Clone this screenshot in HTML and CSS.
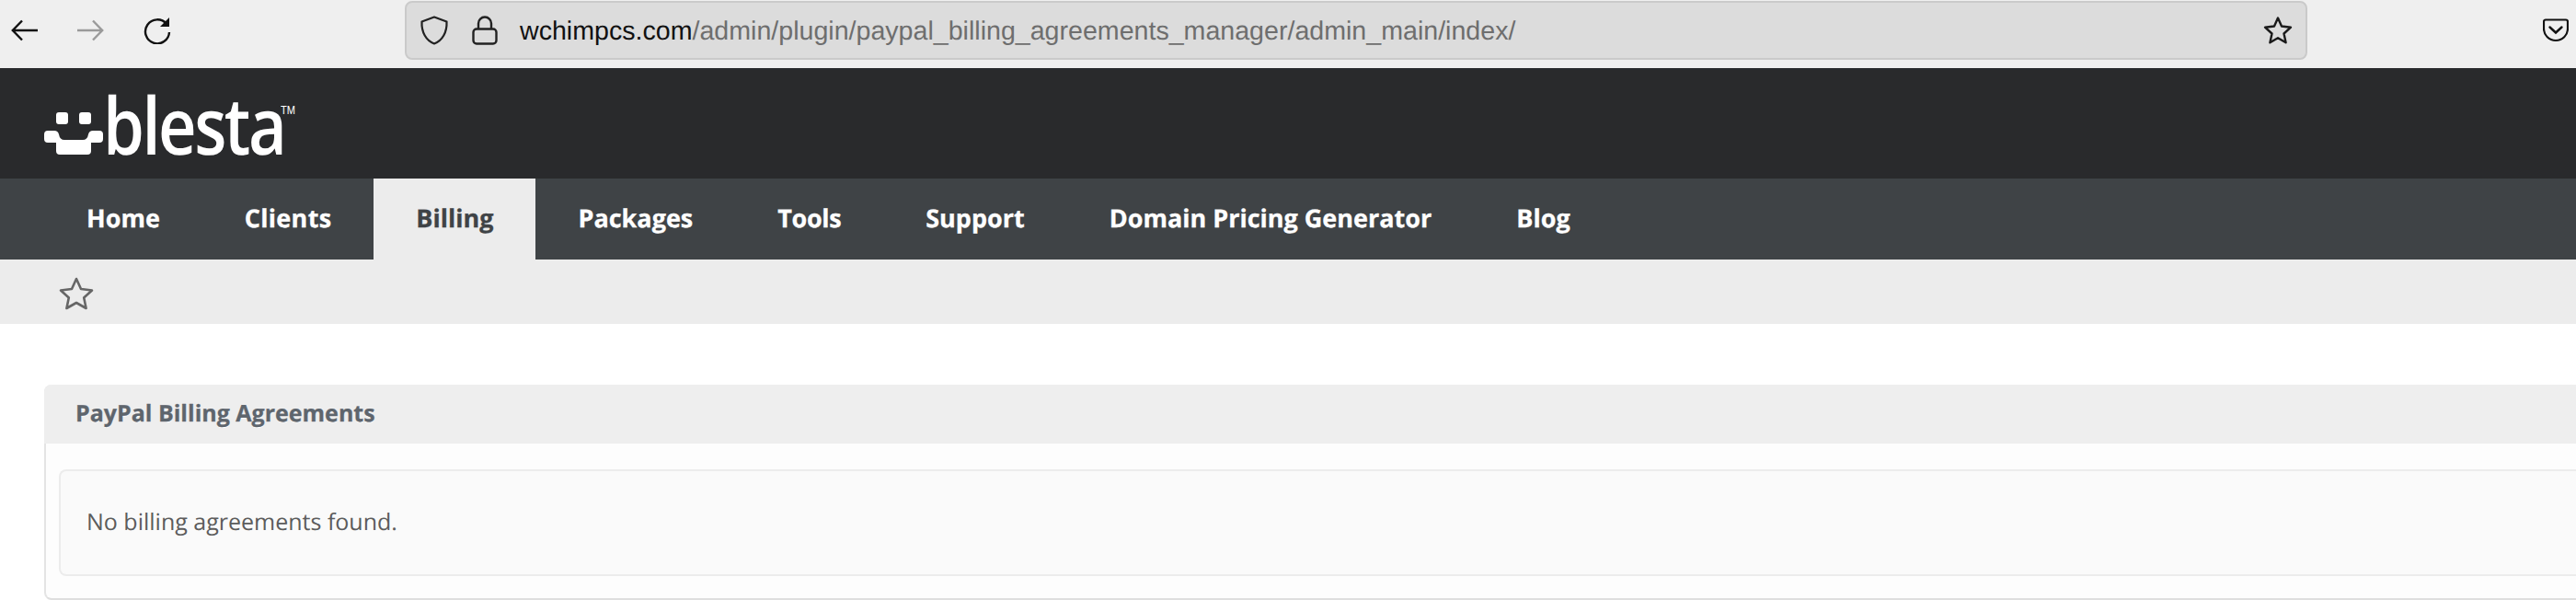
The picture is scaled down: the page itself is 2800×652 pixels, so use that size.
FILE: index.html
```html
<!DOCTYPE html>
<html lang="en">
<head>
<meta charset="utf-8">
<title>PayPal Billing Agreements</title>
<link rel="stylesheet" href="styles.css">
</head>
<body>
<div class="toolbar">
  <svg class="tb-icon back" viewBox="0 0 30 24" width="30" height="24"><path d="M29 12H2M12 1.500 1.800 12 12 22.500" fill="none" stroke="#111" stroke-width="2.400"/></svg>
  <svg class="tb-icon forward" viewBox="0 0 30 24" width="30" height="24"><path d="M0 12h27M17 1.500 27.200 12 17 22.500" fill="none" stroke="#9a9a9a" stroke-width="2.400"/></svg>
  <svg class="tb-icon reload" viewBox="0 0 30 30" width="30" height="30"><path d="M25 8A13 13 0 1 0 28 17" fill="none" stroke="#111" stroke-width="2.400"/><path d="M28 1v10H18z" fill="#111"/></svg>
  <div class="urlbar">
    <svg class="shield" viewBox="0 0 30 32" width="30" height="32"><path d="M15 1.500 28.500 6.500C29 18 24 27 15 30.500 6 27 1 18 1.500 6.500Z" fill="none" stroke="#222" stroke-width="2.200" stroke-linejoin="round"/></svg>
    <svg class="lock" viewBox="0 0 28 32" width="28" height="32"><path d="M7 15V8.500a7 7 0 0 1 14 0V15" fill="none" stroke="#222" stroke-width="2.400"/><rect x="1.500" y="14.500" width="25" height="16" rx="3.500" fill="none" stroke="#222" stroke-width="2.400"/></svg>
    <div class="url"><span class="url-host">wchimpcs.com</span>/admin/plugin/paypal_billing_agreements_manager/admin_main/index/</div>
    <svg class="url-star" viewBox="0 0 32 32" width="32" height="32"><path d="M16 2.500 20 11.500 30 12.700 22.500 19.500 24.600 29.300 16 24.300 7.400 29.300 9.500 19.500 2 12.700 12 11.500Z" fill="none" stroke="#1a1a1a" stroke-width="2.400" stroke-linejoin="round"/></svg>
  </div>
  <svg class="pocket" viewBox="0 0 28 26" width="28" height="26"><path d="M3 1.500h22a2 2 0 0 1 2 2V11a13 13 0 0 1-26 0V3.500a2 2 0 0 1 2-2Z" fill="none" stroke="#111" stroke-width="2.200"/><path d="M7.500 9.500 14 15.500 20.500 9.500" fill="none" stroke="#111" stroke-width="2.400" stroke-linecap="round"/></svg>
</div>

<header class="brand">
  <div class="logo">
    <svg class="smile" viewBox="0 0 64 46" width="64" height="46">
      <rect x="13" y="0" width="13" height="13" rx="3" fill="#fff"/>
      <rect x="38" y="0" width="13" height="13" rx="3" fill="#fff"/>
      <path d="M4 20h7q4 0 5 4 1 6 6 6h20q5 0 6-6 1-4 5-4h7q4 0 4 4v5q0 4-4 4h-9v9q0 4-4 4H17q-4 0-4-4v-9H4q-4 0-4-4v-5q0-4 4-4Z" fill="#fff"/>
    </svg>
    <span class="logo-word">blesta</span>
    <span class="logo-tm">TM</span>
  </div>
</header>

<nav class="nav">
  <a class="nav-item">Home</a>
  <a class="nav-item nav-clients">Clients</a>
  <a class="nav-item active">Billing</a>
  <a class="nav-item">Packages</a>
  <a class="nav-item nav-tools">Tools</a>
  <a class="nav-item">Support</a>
  <a class="nav-item">Domain Pricing Generator</a>
  <a class="nav-item">Blog</a>
</nav>

<div class="subnav">
  <svg class="sub-star" viewBox="0 0 38 36" width="38" height="36"><path d="M19 2 24 13 36 14.500 27.200 22.500 29.600 34 19 28 8.400 34 10.800 22.500 2 14.500 14 13Z" fill="none" stroke="#666" stroke-width="2.600" stroke-linejoin="round"/></svg>
</div>

<main class="content">
  <section class="card">
    <h1 class="card-title">PayPal Billing Agreements</h1>
    <div class="card-body">
      <div class="empty">No billing agreements found.</div>
    </div>
  </section>
</main>
</body>
</html>
```

FILE: styles.css
```css
* { box-sizing: border-box; }

html, body {
  margin: 0;
  padding: 0;
  height: 652px;
  overflow: hidden;
  background: #fff;
}

body {
  font-family: "Open Sans", sans-serif;
  text-rendering: geometricPrecision;
}

.toolbar {
  display: flex;
  align-items: center;
  height: 74px;
  background: #efefef;
  padding: 0 8px 8px 12px;
}

.tb-icon { flex: none; }
.back { margin-right: 42px; }
.forward { margin-right: 42px; }
.reload { margin-right: 254px; }

.urlbar {
  display: flex;
  align-items: center;
  width: 2068px;
  height: 64px;
  padding: 0 14px 0 15px;
  background: #dcdcdc;
  border: 2px solid #cacaca;
  border-radius: 8px;
}

.shield { margin-right: 26px; flex: none; }
.lock { margin-right: 24px; flex: none; }

.url {
  flex: 1;
  padding-top: 2px;
  font-family: "Liberation Sans", Arial, sans-serif;
  font-size: 28.6px;
  color: #6e6e6e;
  white-space: nowrap;
}

.url-host { color: #111; }
.url-star { flex: none; }

.pocket {
  flex: none;
  margin-left: auto;
}

.brand {
  height: 120px;
  background: #292a2c;
  padding: 30px 0 0 48px;
}

.logo {
  display: flex;
  align-items: flex-start;
  height: 64px;
  color: #fff;
}

.smile { margin-top: 18px; flex: none; }

.logo-word {
  width: 193px;
  font-family: "Open Sans", sans-serif;
  font-size: 86px;
  font-weight: 600;
  line-height: 64px;
  letter-spacing: -3px;
  transform: scaleX(0.84);
  transform-origin: left center;
  white-space: nowrap;
}

.logo-tm {
  margin-top: 9px;
  font-family: "Liberation Sans", Arial, sans-serif;
  font-size: 13px;
  line-height: 13px;
  transform: scaleX(0.85);
  transform-origin: left center;
}

.nav {
  display: flex;
  height: 88px;
  padding-left: 48px;
  background: #3f4346;
}

.nav-item {
  display: flex;
  align-items: center;
  padding: 0 46px 3px;
  font-size: 27px;
  font-weight: 700;
  color: #fff;
  white-space: nowrap;
  -webkit-text-stroke: 0.3px currentColor;
}

.nav-clients { letter-spacing: 0.28px; }
.nav-tools { letter-spacing: -0.36px; }

.active {
  background: #ececec;
  color: #3f4346;
}

.subnav {
  display: flex;
  align-items: center;
  height: 70px;
  padding: 3px 0 0 64px;
  background: #ececec;
}

.content {
  padding: 66px 0 0 48px;
}

.card {
  height: 234px;
  margin-right: -20px;
  background: #fdfdfd;
  border-left: 2px solid #e4e4e4;
  border-bottom: 2px solid #dedede;
  border-radius: 8px;
}

.card-title {
  height: 64px;
  margin: 0 0 0 -2px;
  padding-left: 34px;
  background: #eeeeee;
  border-radius: 8px 0 0 0;
  font-size: 25px;
  font-weight: 700;
  line-height: 62px;
  color: #5e656d;
  text-shadow: 0 1px 0 #fff;
  -webkit-text-stroke: 0.3px currentColor;
}

.card-body {
  padding: 28px 0 24px 14px;
}

.empty {
  height: 116px;
  padding-left: 28px;
  background: #fafafa;
  border: 2px solid #ececec;
  border-right: 0;
  border-radius: 8px 0 0 8px;
  font-size: 25px;
  line-height: 110px;
  color: #5c5c5c;
}
```
